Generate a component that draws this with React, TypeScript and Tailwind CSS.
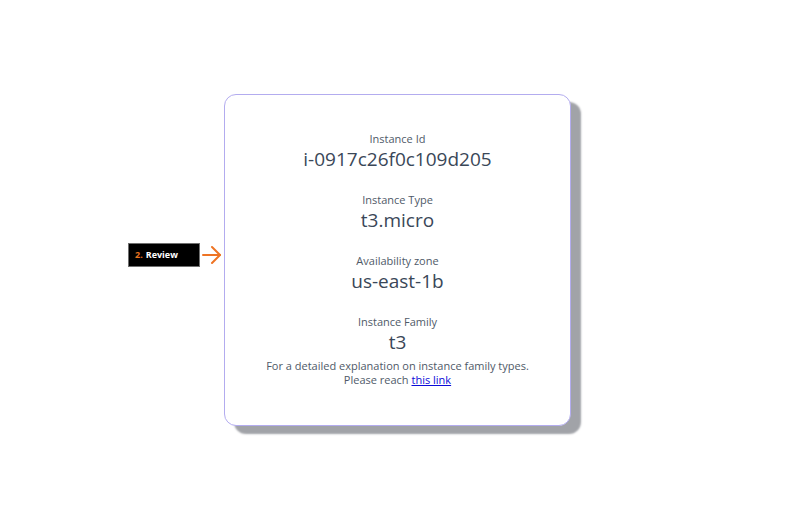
import React from "react";

const Field = ({ label, value, mt }: { label: string; value: string; mt?: string }) => (
  <div className={`flex flex-col items-center ${mt ?? ""}`}>
    <div className="text-[11px] leading-[14px] text-[#4f5a68]">{label}</div>
    <div className="text-[19px] leading-[26px] text-[#3a4758]">{value}</div>
  </div>
);

export default function App() {
  return (
    <div
      className="w-full h-[522px] bg-white flex items-center justify-center"
      style={{ fontFamily: '"Open Sans", "Noto Sans", sans-serif' }}
    >
      <div className="relative mt-[-3px]">
        <div className="absolute right-full top-[149px] mr-[2px] flex items-center">
          <div className="w-[72px] h-[24px] bg-black border border-[#6f6f6f] flex items-center pl-[6px] text-[9px] font-bold leading-none">
            <span className="text-[#e8731f]">2.</span>
            <span className="text-white ml-[3px]">Review</span>
          </div>
          <svg width="21" height="22" viewBox="0 0 21 22" className="ml-[1px]" fill="none" stroke="#ee7424" strokeWidth="2" strokeLinecap="round" strokeLinejoin="round">
            <path d="M2 11h17" />
            <path d="M11 3l8 8-8 8" />
          </svg>
        </div>
        <div className="w-[347px] h-[332px] bg-white rounded-[12px] border border-[#b3acef] shadow-[10px_8px_2px_0_#a1a3a8] pt-[37px] flex flex-col items-center">
          <Field label="Instance Id" value="i-0917c26f0c109d205" />
          <Field label="Instance Type" value="t3.micro" mt="mt-[21px]" />
          <Field label="Availability zone" value="us-east-1b" mt="mt-[21px]" />
          <Field label="Instance Family" value="t3" mt="mt-[21px]" />
          <div className="mt-[4px] text-[11px] leading-[14px] text-[#4f5a68] text-center">
            <div>For a detailed explanation on instance family types.</div>
            <div>
              Please reach <a href="#" className="text-[#0b0bd8] underline">this link</a>
            </div>
          </div>
        </div>
      </div>
    </div>
  );
}
